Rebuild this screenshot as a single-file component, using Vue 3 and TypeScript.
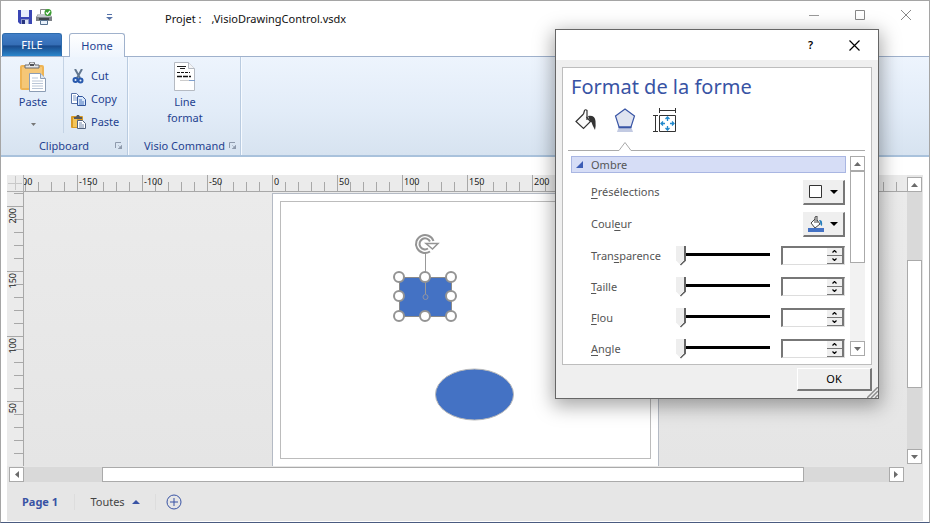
<script setup lang="ts">
import { ref } from 'vue'

interface Tick { pos: number; major: boolean; label: string }

const STEP = 13
function ticks(zero: number, length: number, direction: 1 | -1): Tick[] {
  const result: Tick[] = []
  for (let i = -30; i <= 60; i++) {
    const pos = zero + i * STEP * direction
    if (pos < -14 || pos > length) continue
    result.push({ pos, major: i % 5 === 0, label: String(i * 10) })
  }
  return result
}

const horizontal = ticks(248, 890, 1)
const vertical = ticks(274, 274, -1)

const handles = [
  [399, 277], [425, 277], [451, 277],
  [399, 296], [451, 296],
  [399, 316], [425, 316], [451, 316],
].map(([x, y]) => ({ x: x - 24, y: y - 192 }))

const fields = ref([
  { id: 'transparence', pre: 'Tran', key: 's', post: 'parence', value: 0, text: '' },
  { id: 'taille', pre: '', key: 'T', post: 'aille', value: 0, text: '' },
  { id: 'flou', pre: '', key: 'F', post: 'lou', value: 0, text: '' },
  { id: 'angle', pre: '', key: 'A', post: 'ngle', value: 0, text: '' },
])

const bars = {
  x: { before: 78, thumb: 702, after: 85 },
  y: { before: 69, thumb: 127, after: 61 },
  panel: { before: 0, thumb: 91, after: 78 },
}
</script>

<template>
  <main class="window">
    <header class="titlebar">
      <button class="plain" aria-label="Save">
        <svg width="14" height="14" viewBox="0 0 14 14"><path d="M0 0h14v14H2L0 12z" fill="#3a46b4" /><path d="M3 0h8v7H3z" fill="#e9effc" /><path d="M3 9h8v5H3z" fill="#8d98c9" /><path d="M4 10h3v4H4z" fill="#27357f" /><path d="M7 10h3v4H7z" fill="#dfe5f5" /></svg>
      </button>
      <button class="plain" aria-label="Quick print">
        <svg width="16" height="16" viewBox="0 0 16 16"><path d="M4.500.5h6v5h-6z" fill="#fff" stroke="#888" /><path d="M2 5h12l2 3v4H0V8z" fill="#7c8087" /><path d="M2 5h12l1 3H1z" fill="#c3c7cc" /><path d="M3 9h10v2H3z" fill="#3e4248" /><path d="M4.500 11.500h7v4h-7z" fill="#e9f1fb" stroke="#56708f" /><circle cx="12" cy="3.500" r="3.500" fill="#3b9c32" /><path d="M10 3.500l1.500 1.500L14 2" fill="none" stroke="#fff" stroke-width="1.200" /></svg>
      </button>
      <button class="plain customize" aria-label="Customize toolbar">
        <svg width="7" height="6" viewBox="0 0 7 6"><path d="M1 0h5v1H1zM0 3h7L3.500 6z" fill="#5572a8" /></svg>
      </button>
      <h1 class="title"><span>Projet :</span><span>,VisioDrawingControl.vsdx</span></h1>
      <div class="controls">
        <button class="plain" aria-label="Minimize"><svg width="11" height="11"><path d="M0 5.500h10" stroke="#999" /></svg></button>
        <button class="plain" aria-label="Maximize"><svg width="11" height="11"><path d="M.5.5h9v9h-9z" fill="none" stroke="#888" /></svg></button>
        <button class="plain" aria-label="Close"><svg width="11" height="11"><path d="M0 0l10 10M10 0L0 10" stroke="#888" /></svg></button>
      </div>
    </header>

    <nav class="tabs">
      <button class="tab file">FILE</button>
      <button class="tab home">Home</button>
    </nav>

    <section class="ribbon">
      <div class="group clipboard">
        <div class="tools">
          <button class="big">
            <svg width="26" height="30" viewBox="0 0 26 30"><rect x="0" y="3" width="24" height="25" rx="2" fill="#eeb454" /><path d="M2 5h20v21H2z" fill="#f5c777" /><path d="M5 6V3h4l1-3h4l1 3h4v3z" fill="#e4e6e8" stroke="#686b70" /><path d="M10 2h4v2h-4z" fill="#505358" /><path d="M9.500 11.500h11l5 5v13h-16z" fill="#fff" stroke="#8c9db4" /><path d="M20.500 11.500v5h5" fill="#dce5f0" stroke="#8c9db4" /><path d="M12 16h6M12 19h11M12 21.500h11M12 24h11M12 26.500h11" stroke="#b9c5d6" /></svg>
            <span>Paste</span>
            <svg class="drop" width="5" height="3"><path d="M0 0h5L2.500 3z" fill="#777" /></svg>
          </button>
          <div class="stack">
            <button class="small"><svg width="15" height="15" viewBox="0 0 15 15"><path d="M4 0l5 9M11 0L6 9" stroke="#62778f" stroke-width="2" /><circle cx="4.500" cy="11" r="2" fill="none" stroke="#2859ad" stroke-width="2" /><circle cx="9.500" cy="11.500" r="2" fill="none" stroke="#2859ad" stroke-width="2" /></svg>Cut</button>
            <button class="small"><svg width="15" height="15" viewBox="0 0 15 15"><path d="M.5 1.500h5l3 3v7h-8z" fill="#fff" stroke="#5873a8" /><path d="M2 4h3M2 6h5M2 8h5" stroke="#7f9bc8" /><path d="M6.500 4.500h5l3 3v6h-8z" fill="#d9e8fb" stroke="#31549c" /><path d="M8 8h3M8 10h5M8 12h5" stroke="#4c77bd" /></svg>Copy</button>
            <button class="small"><svg width="15" height="15" viewBox="0 0 15 15"><rect x="0" y="2" width="12" height="12" rx="1" fill="#d99a25" /><path d="M2 4h4v9H2z" fill="#f4c559" /><path d="M3 3h2l1-2h2l1 2h2v2H3z" fill="#545960" /><path d="M6.500 6.500h5l3 3v5h-8z" fill="#fff" stroke="#51617c" /><path d="M8 9h3M8 11h5M8 13h5" stroke="#7389ab" /></svg>Paste</button>
          </div>
        </div>
        <footer class="caption">Clipboard<svg width="7" height="7" viewBox="0 0 7 7"><path d="M.5 6V.5H6" fill="none" stroke="#8e9aac" /><path d="M3 3l3 3M7 3v4H3z" fill="#8e9aac" stroke="#8e9aac" stroke-width=".5" /></svg></footer>
      </div>
      <div class="group command">
        <div class="tools">
          <button class="big line">
            <svg width="24" height="30" viewBox="0 0 24 30"><path d="M1.500.5h14l6 6v22h-20z" fill="#fff" stroke="#b5bac2" /><path d="M15.500.5v6h6" fill="#f3f4f6" stroke="#b5bac2" /><path d="M4 4.500h9M7 6.500h5" stroke="#222" /><path d="M4 10.500h13" stroke="#111" stroke-dasharray="3 1" /><path d="M4 14.500h14" stroke="#111" stroke-width="1.500" stroke-dasharray="5 1" /><path d="M7 18.500h9" stroke="#ccc" /><path d="M16 18.500h6" stroke="#7f9fcd" /></svg>
            <span>Line<br />format</span>
          </button>
        </div>
        <footer class="caption">Visio Command<svg width="7" height="7" viewBox="0 0 7 7"><path d="M.5 6V.5H6" fill="none" stroke="#8e9aac" /><path d="M3 3l3 3M7 3v4H3z" fill="#8e9aac" stroke="#8e9aac" stroke-width=".5" /></svg></footer>
      </div>
    </section>

    <section class="editor">
      <svg class="corner" width="17" height="17"><path d="M1 8.500h14M8.500 1v14" stroke="#c8c8c8" /><path d="M0 16.500h17M16.500 0v17" stroke="#b0b0b0" /></svg>
      <svg class="ruler-x">
        <line v-for="t in horizontal" :key="t.pos" :x1="t.pos + 0.5" :x2="t.pos + 0.5" :y1="t.major ? 0 : 7" y2="16" />
        <template v-for="t in horizontal" :key="t.label"><text v-if="t.major" :x="t.pos + 2" y="10">{{ t.label }}</text></template>
        <rect width="100%" y="16" height="1" fill="#a8a8a8" />
      </svg>
      <svg class="ruler-y">
        <line v-for="t in vertical" :key="t.pos" :y1="t.pos + 0.5" :y2="t.pos + 0.5" :x1="t.major ? 0 : 7" x2="16" />
        <template v-for="t in vertical" :key="t.label"><text v-if="t.major && t.label !== '0' && t.pos > 0" :transform="`translate(9 ${t.pos + 2}) rotate(-90)`" text-anchor="end">{{ t.label }}</text></template>
        <rect x="16" width="1" height="100%" fill="#a8a8a8" />
      </svg>
      <svg class="canvas">
        <rect x="248.5" y="1.5" width="386" height="290" fill="#fff" stroke="#b4bac4" />
        <rect x="256.500" y="9.500" width="370" height="257" fill="#fff" stroke="#bcbcbc" />
        <ellipse cx="450.500" cy="202.500" rx="39" ry="25.500" fill="#4472c4" stroke="#b9b9b9" />
        <rect x="375.500" y="85.500" width="52" height="39" fill="#4472c4" stroke="#8a8a8a" />
        <path d="M401.500 60v42" stroke="#999" />
        <circle cx="401.500" cy="105" r="2.500" fill="none" stroke="#8d93a5" />
        <circle v-for="h in handles" :key="`${h.x}-${h.y}`" :cx="h.x" :cy="h.y" r="5" fill="#fff" stroke="#949494" stroke-width="2" />
        <circle cx="401" cy="52" r="8" fill="#fff" />
        <path d="M406 59.500A9 9 0 1 1 409.500 49" fill="none" stroke="#949494" stroke-width="2" />
        <path d="M404 56.500A5.500 5.500 0 1 1 406 49.500" fill="none" stroke="#949494" stroke-width="2" />
        <path d="M402 51.500h12l-5.500 5.500z" fill="#fff" stroke="#949494" stroke-width="1.500" />
      </svg>
      <div class="scroll vertical">
        <button aria-label="Scroll up"><svg width="7" height="4"><path d="M0 4h7L3.500 0z" /></svg></button>
        <div :style="{ flexGrow: bars.y.before }" /><div class="thumb" :style="{ flexGrow: bars.y.thumb }" /><div :style="{ flexGrow: bars.y.after }" />
        <button aria-label="Scroll down"><svg width="7" height="4"><path d="M0 0h7L3.500 4z" /></svg></button>
      </div>
      <div class="scroll horizontal">
        <button aria-label="Scroll left"><svg width="4" height="7"><path d="M4 0v7L0 3.500z" /></svg></button>
        <div :style="{ flexGrow: bars.x.before }" /><div class="thumb" :style="{ flexGrow: bars.x.thumb }" /><div :style="{ flexGrow: bars.x.after }" />
        <button aria-label="Scroll right"><svg width="4" height="7"><path d="M0 0v7L4 3.500z" /></svg></button>
      </div>
      <nav class="pages">
        <button class="plain current">Page 1</button>
        <button class="plain all">Toutes<svg width="8" height="4"><path d="M0 4h8L4 0z" fill="#3853a4" /></svg></button>
        <button class="plain add" aria-label="Add page"><svg width="16" height="16"><circle cx="8" cy="8" r="7" fill="none" stroke="#3853a4" /><path d="M8 4v8M4 8h8" stroke="#3853a4" /></svg></button>
      </nav>
    </section>

    <section class="dialog" role="dialog" aria-labelledby="dialog-title">
      <header class="dialog-bar">
        <button class="plain help" aria-label="Help">?</button>
        <button class="plain" aria-label="Close dialog"><svg width="11" height="11"><path d="M.5.5l10 10M10.500.5l-10 10" stroke="#000" stroke-width="1.200" /></svg></button>
      </header>
      <div class="panel">
        <h2 id="dialog-title">Format de la forme</h2>
        <div class="modes">
          <button class="plain" aria-label="Remplissage"><svg width="22" height="24" viewBox="0 0 22 24"><path d="M8.500 6L1 13.500l7.500 7 7-7L11.500 9" fill="#fafafa" stroke="#333" stroke-width="1.200" /><path d="M8.500 6l1-3.500q1-1.500 2.500 0V12" fill="none" stroke="#333" stroke-width="1.200" /><path d="M13 8q7-1 7.500 5 .5 5-.5 9-1.500-3-2.500-5-.5-3-2.500-4z" fill="#333" /></svg></button>
          <button class="plain" aria-label="Effets"><svg width="22" height="24" viewBox="0 0 22 24"><path d="M11 1l9.500 7-3.500 11H5L1.500 8z" fill="#e0e4f0" stroke="#3955a5" stroke-width="1.200" /><path d="M4.500 18.500h13v2h-13z" fill="#3955a5" /><path d="M4 21h14l1 3H3z" fill="#c2cae2" /></svg></button>
          <button class="plain" aria-label="Taille et propriétés"><svg width="24" height="24" viewBox="0 0 24 24"><path d="M6.500 7.500h16v16h-16zM6.500 0v5M22.500 0v5M6 2.500h17M0 7.500h5M0 23.500h5M2.500 7v17" fill="none" stroke="#333" /><path d="M14.500 9v4M14.500 18v4M8 15.500h4M17 15.500h4M12.500 11l2-2 2 2M12.500 20l2 2 2-2M10 13.500l-2 2 2 2M19 13.500l2 2-2 2" fill="none" stroke="#2289cc" stroke-width="1.300" /></svg></button>
        </div>
        <svg class="divider" height="9"><path d="M0 8.500h51l6-8 6 8h260" fill="none" stroke="#aaa" /></svg>
        <div class="options">
          <div class="form">
            <h3><svg width="7" height="7"><path d="M7 0v7H0z" fill="#3d5db5" /></svg>Ombre</h3>
            <div class="row top">
              <label for="preset"><u>P</u>résélections</label>
              <button id="preset" class="picker"><svg width="15" height="15"><path d="M1.500 1.500h12v12h-12z" fill="#fff" stroke="#333" /></svg><svg width="8" height="4"><path d="M0 0h8L4 4z" /></svg></button>
            </div>
            <div class="row top">
              <label for="colour">Coul<u>e</u>ur</label>
              <button id="colour" class="picker"><svg width="16" height="16" viewBox="0 0 16 16"><path d="M7 3L3 7l4 5 5-4-3-4" fill="#fff" stroke="#444" /><path d="M7 7V1l2-1v7" fill="none" stroke="#444" /><path d="M11 4q4-1 3 6-2-1-2-4z" fill="#247dbb" /><path d="M0 12h16v4H0z" fill="#4472c4" /></svg><svg width="8" height="4"><path d="M0 0h8L4 4z" /></svg></button>
            </div>
            <div v-for="f in fields" :key="f.id" class="row">
              <label :for="f.id">{{ f.pre }}<u>{{ f.key }}</u>{{ f.post }}</label>
              <input :id="f.id" v-model.number="f.value" type="range" min="0" max="100" />
              <div class="spin">
                <input v-model="f.text" type="text" :aria-label="`${f.pre}${f.key}${f.post}`" />
                <div class="arrows">
                  <button aria-label="Increase"><svg width="5" height="3"><path d="M.5 2.500l2-2 2 2" /></svg></button>
                  <button aria-label="Decrease"><svg width="5" height="3"><path d="M.5.5l2 2 2-2" /></svg></button>
                </div>
              </div>
            </div>
          </div>
          <div class="scroll vertical light">
            <button aria-label="Options up"><svg width="7" height="4"><path d="M0 4h7L3.500 0z" /></svg></button>
            <div class="thumb" :style="{ flexGrow: bars.panel.thumb }" /><div :style="{ flexGrow: bars.panel.after }" />
            <button aria-label="Options down"><svg width="7" height="4"><path d="M0 0h7L3.500 4z" /></svg></button>
          </div>
        </div>
      </div>
      <footer class="actions">
        <button class="ok">OK</button>
        <svg class="grip" width="11" height="11"><path d="M0 11L11 0M4 11l7-7M8 11l3-3" stroke="#8c8c8c" stroke-width="1.500" /></svg>
      </footer>
    </section>
  </main>
</template>

<style>
body { margin: 0; background: #fff; }
</style>

<style scoped>
* { box-sizing: border-box; }
button { font: inherit; color: inherit; padding: 0; margin: 0; border: 0; background: none; }
svg { display: block; flex: none; }
h1, h2, h3 { margin: 0; font-weight: 400; }
.window {
  position: relative; display: flex; flex-direction: column; height: 100vh; min-height: 440px;
  overflow: hidden; background: #fff; border: 1px solid #a5a5a5; border-bottom-color: #4a5b80;
  font: 11px/16px "Noto Sans", "Open Sans", sans-serif; color: #222;
}
.plain { display: flex; align-items: center; justify-content: center; }

.titlebar { display: flex; align-items: center; flex: none; height: 32px; padding-left: 17px; gap: 4px; }
.customize { margin-left: 50px; }
.title { display: flex; gap: 10px; margin-left: 48px; padding-top: 4px; font-size: 11px; color: #111; }
.controls { display: flex; align-self: flex-start; margin-left: auto; padding: 9px 17px 0 0; gap: 35px; }

.tabs { display: flex; flex: none; height: 24px; padding-left: 1px; gap: 7px; border-bottom: 1px solid #9fb1cc; }
.tab { height: 23px; border-radius: 3px 3px 0 0; }
.file { width: 60px; color: #fff; border: 1px solid #2e6cad; border-bottom: 0; background: linear-gradient(#427fc8, #356eb6 50%, #194a8c 54%, #2a86cc); }
.home { width: 56px; height: 24px; color: #1e4292; border: 1px solid #9fb1cc; border-bottom: 0; background: linear-gradient(#fff, #eff5fd); }

.ribbon { display: flex; flex: none; height: 100px; border-bottom: 2px solid #a9c2dc; background: linear-gradient(#edf4fd, #e2ecf8 55%, #d7e3f0); color: #1f4290; }
.group { display: flex; flex-direction: column; justify-content: space-between; border-right: 1px solid #b9cbe0; box-shadow: 1px 0 #f6faff; }
.clipboard { width: 127px; }
.command { width: 113px; }
.tools { display: flex; }
.big { display: flex; flex-direction: column; align-items: center; width: 62px; padding: 5px 0 0 2px; gap: 2px; }
.big .drop { margin-top: 11px; }
.big.line { width: 100%; }
.stack { display: flex; flex-direction: column; padding: 8px 0 0 7px; border-left: 1px solid #c4d3e5; height: 76px; }
.small { display: flex; align-items: center; gap: 5px; height: 23px; }
.caption { display: flex; align-items: center; justify-content: flex-end; gap: 4px; padding: 0 4px; height: 19px; }
.clipboard .caption { gap: 26px; padding-right: 5px; }

.editor {
  flex: 1; min-height: 0; display: grid; margin: 18px 6px 1px; background: #e6e6e6;
  grid-template: 17px minmax(0, 1fr) 17px 38px / 17px minmax(0, 1fr) 16px;
}
.corner, .ruler-x, .ruler-y { background: #ebebeb; }
.ruler-x { width: 100%; height: 17px; }
.ruler-y { width: 17px; height: 100%; grid-area: 2 / 1; }
.ruler-x line, .ruler-y line { stroke: #a8a8a8; }
.ruler-x text, .ruler-y text { font-size: 9px; fill: #222; }
.canvas { grid-area: 2 / 2; width: 100%; height: 100%; background: linear-gradient(#ebebeb, #e5e5e5); }

.scroll { display: flex; }
.scroll > button { flex: none; display: flex; align-items: center; justify-content: center; width: 15px; height: 15px; border: 1px solid #aaa; background: #fff; }
.scroll > div { flex-basis: 0; background: #d9d9d9; }
.scroll > .thumb { border: 1px solid #aaa; background: #fff; }
.scroll path { fill: #6b6b6b; }
.editor > .vertical { grid-area: 1 / 3 / 3 / 4; padding: 2px 1px 2px 0; }
.vertical { flex-direction: column; }
.horizontal { grid-area: 3 / 1 / 4 / 4; padding: 1px 19px 1px 2px; }
.scroll.light > div:not(.thumb) { background: #f2f2f2; }

.pages { grid-area: 4 / 1 / 5 / 4; display: flex; align-items: center; padding-left: 15px; color: #444; }
.pages .plain { height: 16px; }
.pages .current { width: 53px; justify-content: flex-start; border-right: 1px solid #ddd; font-weight: 700; color: #3853a4; }
.pages .all { width: 81px; gap: 7px; border-right: 1px solid #ddd; }
.add { margin-left: 10px; }

.dialog {
  position: absolute; left: 554px; top: 28px; width: 324px; display: flex; flex-direction: column;
  background: #efefef; border: 1px solid #666; box-shadow: 0 5px 18px 2px rgba(0, 0, 0, .35); color: #555;
}
.dialog-bar { display: flex; align-items: center; justify-content: flex-end; height: 30px; padding-right: 18px; gap: 36px; background: #fff; }
.help { color: #000; font-weight: 600; }
.panel { margin: 7px 6px 0; height: 298px; border: 1px solid #bdbdbd; background: #fff; overflow: hidden; }
h2 { padding: 5px 8px 0; font-size: 20px; line-height: 28px; color: #3853a4; }
.modes { display: flex; padding: 7px 0 0 12px; gap: 17px; height: 41px; align-items: flex-start; }
.divider { width: calc(100% - 11px); margin-left: 5px; }
.options { display: flex; padding: 5px 6px 8px 8px; gap: 4px; height: 213px; }
.form { flex: 1; min-width: 0; }
h3 { display: flex; align-items: center; gap: 8px; height: 17px; padding-left: 4px; border: 1px solid #a9b6e2; background: #d6ddf6; font-size: 11px; }
.row { display: flex; align-items: center; height: 31px; padding: 0 1px 0 20px; }
.row.top { height: 32px; justify-content: space-between; }
h3 + .row { margin-top: 3px; }
.row > label { flex: 1; }
u { text-underline-offset: 2px; }
.picker { display: flex; align-items: center; justify-content: space-between; width: 42px; height: 25px; padding: 0 5px 0 4px; background: #efefef; border: solid; border-width: 1px 2px 2px 1px; border-color: #efefef #777 #777 #efefef; }
input[type="range"] { appearance: none; width: 94px; height: 20px; margin: 0 11px 0 0; background: linear-gradient(#000, #000) 0 7px / 100% 3px no-repeat; }
input[type="range"]::-webkit-slider-thumb {
  appearance: none; width: 10px; height: 20px;
  background: linear-gradient(135deg, transparent 16px, #666 16px), linear-gradient(90deg, #eee 80%, #666 80%);
  clip-path: polygon(0 0, 100% 0, 100% 75%, 50% 100%, 0 75%);
}
.spin { display: flex; width: 64px; height: 19px; border: solid; border-width: 2px 1px 1px 2px; border-color: #777 #ddd #ddd #777; }
.spin input { flex: 1; min-width: 0; padding: 0 2px; border: 0; background: #fff; font: inherit; }
.arrows { display: flex; flex-direction: column; width: 17px; }
.arrows button { flex: 1; display: flex; align-items: center; justify-content: center; background: #efefef; border: solid #777; border-width: 0 2px 1px 0; }
.arrows path { fill: none; stroke: #000; stroke-width: 1.2; }
.actions { position: relative; display: flex; justify-content: flex-end; padding: 3px 6px 7px; }
.ok { width: 75px; height: 23px; color: #000; background: #efefef; border: solid; border-width: 1px 2px 2px 1px; border-color: #fff #777 #777 #fff; }
.grip { position: absolute; right: 0; bottom: 0; }
</style>
